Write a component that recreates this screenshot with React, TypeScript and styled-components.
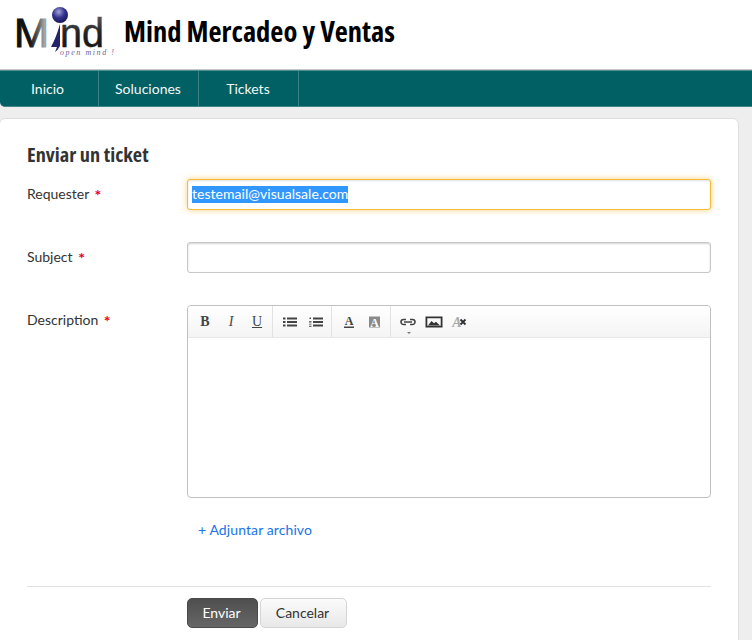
import styled, { createGlobalStyle } from "styled-components";

const GlobalStyle = createGlobalStyle`
  html, body {
    margin: 0;
    padding: 0;
    background: #eeeeee;
    font-family: "Lato", sans-serif;
    color: #333;
  }
  * {
    box-sizing: border-box;
  }
`;

const required = [
  { label: "Requester", focused: true, value: "testemail@visualsale.com" },
  { label: "Subject", focused: false, value: "" },
];

function Logo() {
  return (
    <svg width="104" height="56" viewBox="0 0 104 56">
      <defs>
        <linearGradient id="mFill" x1="0" x2="1" y1="0" y2="0">
          <stop offset="0" stopColor="#111" />
          <stop offset="0.45" stopColor="#111" />
          <stop offset="0.72" stopColor="#666" />
          <stop offset="0.88" stopColor="#aaa" />
          <stop offset="1" stopColor="#444" />
        </linearGradient>
        <linearGradient id="ndFill" x1="0" x2="0" y1="0" y2="1">
          <stop offset="0" stopColor="#666" />
          <stop offset="0.5" stopColor="#222" />
          <stop offset="1" stopColor="#111" />
        </linearGradient>
        <radialGradient id="ball" cx="0.42" cy="0.3" r="0.75">
          <stop offset="0" stopColor="#a3a3da" />
          <stop offset="0.5" stopColor="#33328f" />
          <stop offset="1" stopColor="#14134f" />
        </radialGradient>
      </defs>
      <circle cx="46" cy="9" r="8" fill="url(#ball)" />
      <text
        x="0"
        y="41"
        fontFamily="Liberation Sans, sans-serif"
        fontSize="40"
        fill="url(#mFill)"
        stroke="url(#mFill)"
        strokeWidth="0.9"
        textLength="35"
        lengthAdjust="spacingAndGlyphs"
      >
        M
      </text>
      <path d="M46 18 L46 40 Q44 44 41 46 L43 41 L37 41 Q42 32 46 18 Z" fill="#23236b" />
      <text
        x="46"
        y="41"
        fontFamily="Liberation Sans, sans-serif"
        fontSize="40"
        fill="url(#ndFill)"
        stroke="url(#ndFill)"
        strokeWidth="0.5"
        textLength="44"
        lengthAdjust="spacingAndGlyphs"
      >
        nd
      </text>
      <text
        x="46"
        y="48.500"
        fontFamily="Liberation Serif, serif"
        fontStyle="italic"
        fontSize="8"
        fill="#6a5f9f"
        textLength="54"
      >
        open mind !
      </text>
    </svg>
  );
}

function ToolIcon({ children }: { children: React.ReactNode }) {
  return (
    <svg width="18" height="16" viewBox="0 0 18 16" fill="#444">
      {children}
    </svg>
  );
}

function Toolbar() {
  return (
    <EditorToolbar>
      <ToolGroup>
        <ToolButton $serif>B</ToolButton>
        <ToolButton $serif $italic>I</ToolButton>
        <ToolButton $serif $underline>U</ToolButton>
      </ToolGroup>
      <ToolGroup>
        <ToolButton>
          <ToolIcon>
            <path d="M2 3.500h2.500v2H2zM6 3.500h10v2H6zM2 7h2.500v2H2zM6 7h10v2H6zM2 10.500h2.500v2H2zM6 10.500h10v2H6z" />
          </ToolIcon>
        </ToolButton>
        <ToolButton>
          <ToolIcon>
            <path d="M6 3.500h10v2H6zM6 7h10v2H6zM6 10.500h10v2H6zM2.500 3.500h1.500v1.500H2.500zM2 7h2.500v.8H2zM2 8.500h2.500v.8H2zM2 10.500h2.500v.8H2zM2 12h2.500v.8H2z" />
          </ToolIcon>
        </ToolButton>
      </ToolGroup>
      <ToolGroup>
        <ToolButton>
          <ToolIcon>
            <text x="9" y="11" textAnchor="middle" fontFamily="Liberation Serif, serif" fontWeight="700" fontSize="12">A</text>
            <rect x="4" y="12.500" width="10" height="1.500" />
          </ToolIcon>
        </ToolButton>
        <ToolButton>
          <ToolIcon>
            <rect x="3" y="2.500" width="11" height="11" fill="#8a8a8a" />
            <text x="8.500" y="12.500" textAnchor="middle" fontFamily="Liberation Serif, serif" fontWeight="700" fontSize="12" fill="#fff">A</text>
          </ToolIcon>
        </ToolButton>
      </ToolGroup>
      <LastGroup>
        <ToolButton>
          <ToolIcon>
            <path
              d="M7 5.500H4.500a2.500 2.500 0 0 0 0 5H7M11 5.500h2.500a2.500 2.500 0 0 1 0 5H11M5 8h8"
              fill="none"
              stroke="#444"
              strokeWidth="1.600"
            />
          </ToolIcon>
          <Caret />
        </ToolButton>
        <ToolButton>
          <ToolIcon>
            <path fillRule="evenodd" d="M.500 2.500h17v11H.500zM2.300 4.300v7.400h13.400V4.300z" fill="#333" />
            <path d="M3 11.500L6.500 7l2.500 2.300 2-1.500 4 3.700z" fill="#333" />
          </ToolIcon>
        </ToolButton>
        <ToolButton>
          <ToolIcon>
            <text x="6" y="12.500" textAnchor="middle" fontFamily="Liberation Serif, serif" fontStyle="italic" fontSize="14" fill="#aaa">A</text>
            <path d="M9.500 5.500l5 5M14.500 5.500l-5 5" stroke="#333" strokeWidth="1.900" fill="none" />
          </ToolIcon>
        </ToolButton>
      </LastGroup>
    </EditorToolbar>
  );
}

export default function App() {
  return (
    <>
      <GlobalStyle />
      <Header>
        <Logo />
        <BrandTitle>Mind Mercadeo y Ventas</BrandTitle>
      </Header>
      <NavBar>
        <NavItem>Inicio</NavItem>
        <NavItem>Soluciones</NavItem>
        <NavItem>Tickets</NavItem>
      </NavBar>
      <Page>
        <Card>
          <CardTitle>Enviar un ticket</CardTitle>
          {required.map((field) => (
            <FieldRow key={field.label}>
              <FieldLabel>
                {field.label} <Star>*</Star>
              </FieldLabel>
              <TextInput $focused={field.focused}>
                {field.value && <Selected>{field.value}</Selected>}
              </TextInput>
            </FieldRow>
          ))}
          <EditorRow>
            <FieldLabel>
              Description <Star>*</Star>
            </FieldLabel>
            <Editor>
              <Toolbar />
            </Editor>
          </EditorRow>
          <AttachRow>
            <AttachLink href="#">+ Adjuntar archivo</AttachLink>
          </AttachRow>
          <Actions>
            <SubmitButton>Enviar</SubmitButton>
            <CancelButton>Cancelar</CancelButton>
          </Actions>
        </Card>
      </Page>
    </>
  );
}

const Header = styled.header`
  height: 70px;
  background: #fff;
  border-bottom: 1px solid #c8c8c8;
  display: flex;
  align-items: flex-start;
  padding: 6px 0 0 14px;
  gap: 6px;
`;

const BrandTitle = styled.h1`
  margin: 7px 0 0;
  font-family: "Open Sans", sans-serif;
  font-stretch: condensed;
  font-size: 28.5px;
  line-height: 37px;
  font-weight: 700;
  color: #000;
  white-space: nowrap;
`;

const NavBar = styled.nav`
  height: 37px;
  background: #006064;
  border-top: 1px solid #4d8f92;
  border-bottom: 1px solid #3f8689;
  border-radius: 0 0 0 5px;
  display: flex;
`;

const NavItem = styled.a`
  width: 100px;
  border-right: 1px solid #3a8285;
  color: #f4f8f8;
  font-size: 14px;
  line-height: 35px;
  text-align: center;
  padding-right: 1px;
  &:first-child {
    width: 99px;
    padding-right: 3px;
  }
`;

const Page = styled.main`
  height: 533px;
  padding-top: 11px;
  overflow: hidden;
`;

const Card = styled.section`
  width: 740px;
  margin-left: -1px;
  height: 540px;
  background: #fff;
  border: 1px solid #dedede;
  border-radius: 6px;
  padding: 23px 0 0 27px;
`;

const CardTitle = styled.h2`
  margin: 0 0 12px;
  font-family: "Open Sans", sans-serif;
  font-stretch: condensed;
  font-size: 20.3px;
  line-height: 25px;
  font-weight: 700;
  color: #333;
`;

const FieldRow = styled.div`
  display: flex;
  margin-bottom: 32px;
`;

const EditorRow = styled.div`
  display: flex;
`;

const FieldLabel = styled.label`
  width: 160px;
  flex: none;
  font-size: 14px;
  line-height: 20px;
  padding-top: 5px;
  color: #333;
`;

const Star = styled.span`
  color: #e8001c;
  font-weight: 700;
  font-size: 16px;
  line-height: 14px;
  margin-left: 2px;
  vertical-align: -2px;
`;

const TextInput = styled.div<{ $focused: boolean }>`
  width: 524px;
  height: 31px;
  background: #fff;
  border: 1px solid ${(p) => (p.$focused ? "#f6bb3c" : "#c8c8c8")};
  border-radius: 3px;
  padding: 4px;
  font-size: 14px;
  line-height: 22px;
  box-shadow: ${(p) =>
    p.$focused
      ? "inset 0 1px 2px rgba(0,0,0,0.12), 0 0 6px rgba(250,185,60,0.65)"
      : "inset 0 1px 2px rgba(0,0,0,0.18)"};
`;

const Selected = styled.span`
  display: inline-block;
  background: #3297fd;
  color: #fff;
  height: 17px;
  line-height: 16px;
  margin-top: 2px;
  vertical-align: top;
  letter-spacing: 0.04px;
`;

const Editor = styled.div`
  width: 524px;
  height: 193px;
  border: 1px solid #c0c0c0;
  border-radius: 4px;
`;

const EditorToolbar = styled.div`
  height: 32px;
  display: flex;
  border-bottom: 1px solid #e8e8e8;
  border-radius: 4px 4px 0 0;
  background: linear-gradient(#fff, #f4f4f4);
`;

const ToolGroup = styled.div`
  display: flex;
  align-items: center;
  padding: 0 2px 0 4px;
  border-right: 1px solid #e2e2e2;
`;

const LastGroup = styled(ToolGroup)`
  border-right: 0;
`;

const ToolButton = styled.span<{ $serif?: boolean; $italic?: boolean; $underline?: boolean }>`
  position: relative;
  width: 26px;
  height: 26px;
  display: flex;
  align-items: center;
  justify-content: center;
  font-family: ${(p) => (p.$serif ? '"Liberation Serif", serif' : "inherit")};
  font-weight: ${(p) => (p.$italic || p.$underline ? 400 : 700)};
  font-style: ${(p) => (p.$italic ? "italic" : "normal")};
  text-decoration: ${(p) => (p.$underline ? "underline" : "none")};
  font-size: 14px;
  color: #444;
`;

const Caret = styled.span`
  position: absolute;
  left: 12px;
  bottom: 1px;
  width: 0;
  height: 0;
  border: 2px solid transparent;
  border-top-color: #777;
  border-bottom: 0;
`;

const AttachRow = styled.div`
  padding: 21px 0 0 171px;
  height: 89px;
  width: 684px;
  border-bottom: 1px solid #e3e3e3;
`;

const AttachLink = styled.a`
  color: #1a73e8;
  font-size: 14px;
  line-height: 20px;
  letter-spacing: 0.1px;
  text-decoration: none;
`;

const Actions = styled.div`
  display: flex;
  gap: 2px;
  padding: 11px 0 0 160px;
`;

const SubmitButton = styled.button`
  width: 71px;
  height: 30px;
  border: 1px solid #4a4a4a;
  border-radius: 5px;
  background: linear-gradient(#4f4f4f, #666);
  color: #fff;
  font-family: "Lato", sans-serif;
  font-size: 14px;
  padding: 0 2px 2px 0;
`;

const CancelButton = styled.button`
  width: 87px;
  height: 30px;
  border: 1px solid #d4d4d4;
  border-radius: 5px;
  background: linear-gradient(#fbfbfb, #e8e8e8);
  color: #333;
  font-family: "Lato", sans-serif;
  font-size: 14px;
  padding: 0 2px 2px 0;
`;
